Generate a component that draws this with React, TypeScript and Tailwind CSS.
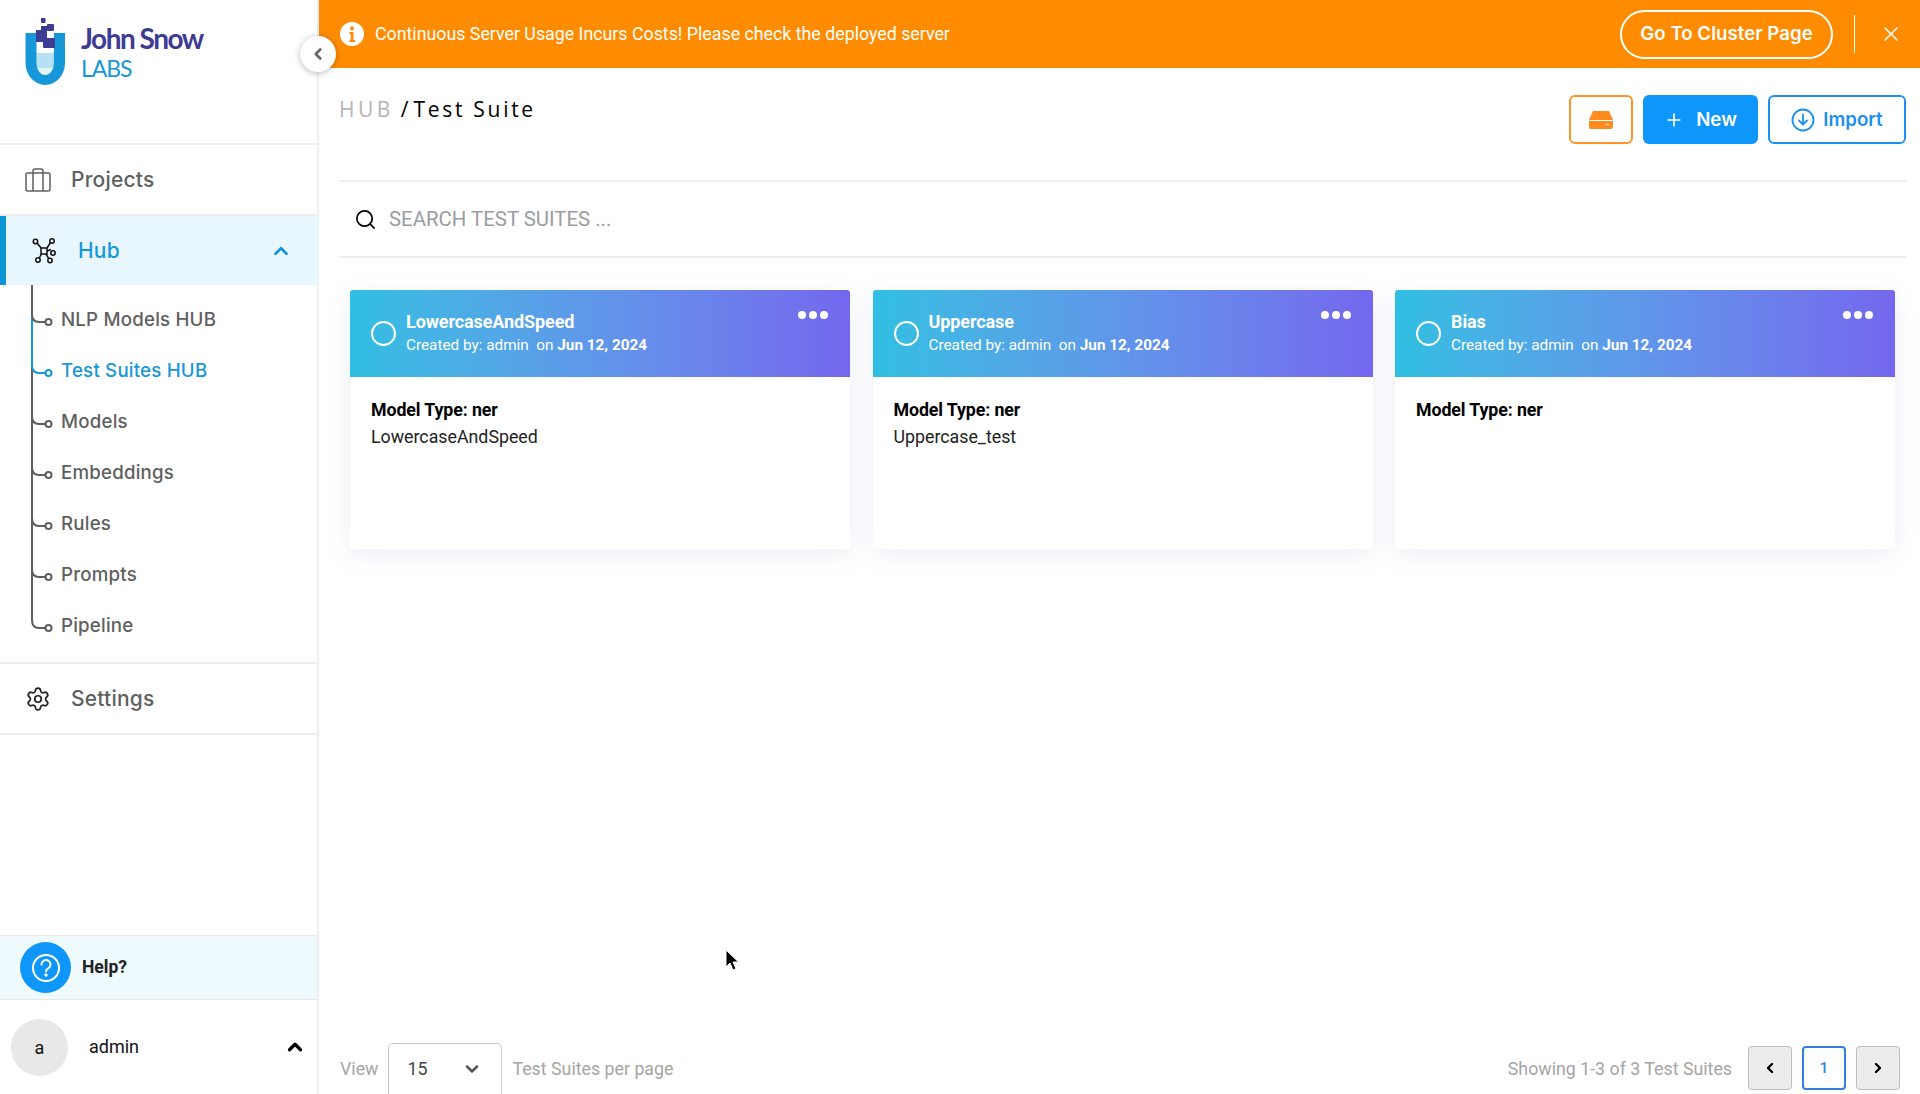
import React from "react";
import { Settings, Search, ChevronLeft, ChevronUp, ChevronDown, ChevronRight, Plus, X } from "lucide-react";

const navItems = ["NLP Models HUB", "Test Suites HUB", "Models", "Embeddings", "Rules", "Prompts", "Pipeline"];

function Logo() {
  return (
    <svg width="44" height="70" viewBox="24 17 44 70" className="shrink-0">
      <rect x="36.500" y="53" width="17.500" height="15" fill="#b6e1f4" />
      <path d="M36.500 68h17.500v3c-2 3-5 4.500-8.700 4.500s-6.800-1.500-8.800-4.500z" fill="#e4f4fb" />
      <path d="M25.500 33h11v30a8.700 12 0 0 0 17.400 0V33H65v30a19.750 22 0 0 1-39.500 0z" fill="#1697d8" />
      <rect x="41" y="18" width="4.500" height="5" rx="1" fill="#3d3c92" />
      <rect x="47" y="24" width="7" height="7" rx="1" fill="#3d3c92" />
      <rect x="36" y="30" width="11" height="12" fill="#3d3c92" />
      <rect x="41" y="26" width="6" height="5" fill="#3d3c92" />
      <rect x="43" y="38" width="12" height="10" rx="1" fill="#3d3c92" />
    </svg>
  );
}

function HubIcon() {
  return (
    <svg width="24" height="26" viewBox="0 0 24 26" fill="none" stroke="#111" strokeWidth="1.500">
      <rect x="9" y="10" width="6" height="6" />
      <circle cx="3.500" cy="3.500" r="2.200" />
      <circle cx="20" cy="3" r="2.200" />
      <circle cx="21" cy="15" r="2.200" />
      <circle cx="6" cy="22" r="2.200" />
      <circle cx="18" cy="22.500" r="2.200" />
      <path d="M5 5l4.500 5.500M18.500 4.500L15 10M15 13l4-1.500M9.500 16l-2.500 4.500M14 16l3 5" />
    </svg>
  );
}

function BagIcon() {
  return (
    <svg width="26" height="24" viewBox="0 0 26 24" fill="none" stroke="#5f5f5f" strokeWidth="1.500">
      <rect x="1" y="5" width="24" height="18" rx="2" />
      <path d="M8 23V3a2 2 0 0 1 2-2h6a2 2 0 0 1 2 2v20" />
    </svg>
  );
}

function TreeLines() {
  const ys = [37, 88, 139, 190, 241, 292, 343];
  return (
    <svg width="60" height="377" viewBox="0 0 60 377" fill="none" className="absolute left-0 top-0" strokeWidth="2">
      <path d="M32 0V335" stroke="#5f5f5f" />
      <path d="M32 30V80" stroke="#1697d8" />
      {ys.map((y, i) => (
        <g key={y} stroke={i === 1 ? "#1697d8" : "#5f5f5f"}>
          <path d={`M32 ${y - 8}c0 6 3 8 7 8h6.500`} />
          <circle cx="48.500" cy={y} r="3" />
        </g>
      ))}
    </svg>
  );
}

function Card({ title, desc }: { title: string; desc?: string }) {
  return (
    <div className="w-[500px] h-[259px] bg-white rounded-[3px] shadow-[0_5px_24px_rgba(225,228,240,0.6)]">
      <div className="h-[87px] rounded-t-[3px] bg-gradient-to-r from-[#2fbfe2] to-[#7467ee] flex items-center pl-[21px] pr-[20px] relative text-white">
        <div className="w-[25px] h-[25px] rounded-full border-[2px] border-white shrink-0" />
        <div className="ml-[10px] font-['Roboto',sans-serif]">
          <div className="text-[18px] leading-[22px] font-bold tracking-[-0.1px]">{title}</div>
          <div className="text-[15.300px] leading-[22px] mt-[1px]">
            Created by: admin&nbsp; on <span className="font-bold">Jun 12, 2024</span>
          </div>
        </div>
        <div className="absolute right-[22px] top-[21px] flex gap-[3px]">
          <span className="w-[8px] h-[8px] rounded-full bg-white" />
          <span className="w-[8px] h-[8px] rounded-full bg-white" />
          <span className="w-[8px] h-[8px] rounded-full bg-white" />
        </div>
      </div>
      <div className="pl-[21px] pt-[20px] font-['Roboto',sans-serif] text-[17.800px] leading-[26.500px]">
        <div className="font-bold text-black tracking-[-0.1px]">Model Type: ner</div>
        {desc && <div className="text-[#222]">{desc}</div>}
      </div>
    </div>
  );
}

export default function App() {
  return (
    <div className="w-[1920px] h-[1094px] overflow-hidden flex bg-white relative font-['Inter',sans-serif]">
      <aside className="w-[319px] shrink-0 h-full border-r-[2px] border-[#eeeeee] flex flex-col relative bg-white">
        <div className="h-[143px] shrink-0 pl-[24px] pt-[17px] flex items-start gap-[13px]">
          <Logo />
          <div className="pt-[5px]">
            <div className="font-['Lato',sans-serif] font-bold text-[28px] leading-[32px] tracking-[-1.500px] text-[#3d3c92] whitespace-nowrap">John Snow</div>
            <div className="font-['Lato',sans-serif] text-[23px] leading-[28px] tracking-[-1.100px] text-[#1697d8]">LABS</div>
          </div>
        </div>
        <div className="h-[73px] shrink-0 border-y-[2px] border-[#eeeeee] flex items-center pl-[25px] gap-[20px] text-[21px] font-medium text-[#5f5f5f]">
          <BagIcon />
          <span className="tracking-[0.200px]">Projects</span>
        </div>
        <div className="h-[69px] shrink-0 w-[319px] bg-[#e8f6fd] border-l-[6px] border-[#0d96d6] flex items-center pl-[26px] pr-[27px] text-[21px] font-medium text-[#1697d8]">
          <HubIcon />
          <span className="ml-[22px] flex-1 tracking-[0.200px]">Hub</span>
          <ChevronUp size={22} strokeWidth={3} />
        </div>
        <div className="h-[377px] shrink-0 relative pt-[10px]">
          <TreeLines />
          {navItems.map((n, i) => (
            <div key={n} className={`h-[51px] pl-[61px] flex items-center text-[18.700px] font-medium tracking-[0.200px] ${i === 1 ? "text-[#1697d8]" : "text-[#5f5f5f]"}`}>
              {n}
            </div>
          ))}
        </div>
        <div className="h-[73px] shrink-0 border-y-[2px] border-[#eeeeee] flex items-center pl-[25px] gap-[20px] text-[21px] font-medium text-[#5f5f5f]">
          <Settings size={26} strokeWidth={1.600} className="text-[#222]" />
          <span className="tracking-[0.200px]">Settings</span>
        </div>
        <div className="flex-1" />
        <div className="h-[65px] shrink-0 bg-[#eefafe] border-y border-[#e8e8e8] flex items-center pl-[20px] font-['Roboto',sans-serif]">
          <div className="w-[51px] h-[51px] rounded-full bg-[#0f96fb] flex items-center justify-center">
            <svg width="30" height="30" viewBox="0 0 30 30" fill="none" stroke="#fff" strokeWidth="2">
              <circle cx="15" cy="15" r="13" />
              <path d="M10.500 11.500a4.500 4.500 0 1 1 6.800 3.900c-1.400.8-2.300 1.700-2.300 3.100" strokeLinecap="round" />
              <circle cx="15" cy="22" r="0.700" fill="#fff" />
            </svg>
          </div>
          <span className="ml-[11px] text-[17.500px] font-bold text-[#222]">Help?</span>
        </div>
        <div className="h-[94px] shrink-0 flex items-center pl-[11px] pr-[11px] font-['Roboto',sans-serif] text-[18px] text-[#111]">
          <div className="w-[57px] h-[57px] rounded-full bg-[#e8e8e8] flex items-center justify-center">a</div>
          <span className="ml-[21px] flex-1 -mt-[2px]">admin</span>
          <ChevronUp size={22} strokeWidth={3.500} className="text-black -mt-[1px]" />
        </div>
      </aside>

      <button className="absolute left-[300px] top-[36px] w-[36px] h-[36px] rounded-full bg-white shadow-[0_1px_6px_rgba(0,0,0,0.28)] flex items-center justify-center z-10 text-[#666]">
        <ChevronLeft size={18} strokeWidth={3.500} />
      </button>

      <main className="flex-1 min-w-0 flex flex-col">
        <div className="h-[68px] shrink-0 bg-[#ff8b00] flex items-center pl-[13px] pr-[17px] text-white">
          <svg width="24" height="24" viewBox="0 0 24 24" className="shrink-0 ml-[8px]">
            <circle cx="12" cy="12" r="12" fill="#fff" />
            <circle cx="12" cy="6.500" r="2" fill="#ff8b00" />
            <path d="M9.500 10h4v8h1.500v2H9.500v-2h1.200v-6H9.500z" fill="#ff8b00" />
          </svg>
          <span className="ml-[11px] font-['Roboto',sans-serif] text-[17.800px]">Continuous Server Usage Incurs Costs! Please check the deployed server</span>
          <div className="flex-1" />
          <div className="w-[213px] h-[49px] rounded-full border-[2px] border-white flex items-center justify-center text-[18.700px] font-semibold whitespace-nowrap pt-[1px]">Go To Cluster Page</div>
          <div className="w-[1px] h-[38px] bg-white ml-[21px]" />
          <X size={24} strokeWidth={1.600} className="ml-[24px]" />
        </div>

        <div className="ml-[20px] mr-[14px] flex-1 flex flex-col min-h-0">
          <div className="h-[114px] shrink-0 flex items-start justify-between border-b-[2px] border-[#eeeeee]">
            <div className="mt-[27px] font-['Open_Sans',sans-serif] text-[21px] leading-[28px] flex">
              <span className="text-[#b5b5b5] tracking-[3.500px]">HUB</span>
              <span className="text-black ml-[7px]">/</span>
              <span className="text-black ml-[5px] tracking-[2.700px]">Test Suite</span>
            </div>
            <div className="mt-[27px] flex">
              <div className="w-[64px] h-[49px] rounded-[6px] border-[2px] border-[#ff9325] flex items-center justify-center">
                <svg width="24" height="18" viewBox="0 0 24 18">
                  <path d="M4 0h16l4 9H0z" fill="#ff8b1f" />
                  <path d="M0 10h24v6a2 2 0 0 1-2 2H2a2 2 0 0 1-2-2z" fill="#ff8b1f" />
                  <rect x="17" y="13" width="3" height="1" fill="#fff" />
                </svg>
              </div>
              <div className="ml-[10px] w-[115px] h-[49px] rounded-[6px] bg-[#0f96fb] text-white flex items-center justify-center gap-[12px] text-[18.700px] font-semibold">
                <Plus size={20} strokeWidth={2} />
                <span className="pt-[2px]">New</span>
              </div>
              <div className="ml-[10px] w-[138px] h-[49px] rounded-[6px] border-[2px] border-[#1b90f0] text-[#1b90f0] flex items-center justify-center gap-[8px] text-[18.700px] font-semibold">
                <svg width="24" height="24" viewBox="0 0 24 24" fill="none" stroke="currentColor" strokeWidth="1.800" strokeLinecap="round" strokeLinejoin="round">
                  <circle cx="12" cy="12" r="10.500" />
                  <path d="M12 6.500v10M8 12.500l4 4 4-4" />
                </svg>
                <span className="pt-[2px]">Import</span>
              </div>
            </div>
          </div>

          <div className="h-[76px] shrink-0 border-b-[2px] border-[#eeeeee] flex items-center pl-[15px]">
            <Search size={23} strokeWidth={1.800} className="text-black" />
            <span className="ml-[12px] font-['Roboto',sans-serif] text-[20.400px] text-[#9a9ca3]">SEARCH TEST SUITES ...</span>
          </div>

          <div className="mt-[32px] ml-[11px] flex gap-[22.500px]">
            <Card title="LowercaseAndSpeed" desc="LowercaseAndSpeed" />
            <Card title="Uppercase" desc="Uppercase_test" />
            <Card title="Bias" />
          </div>

          <div className="flex-1" />

          <div className="h-[51px] shrink-0 flex items-start font-['Roboto',sans-serif] text-[17.800px] text-[#a5a5a5]">
            <span className="mt-[13px] ml-[1px]">View</span>
            <div className="ml-[10px] w-[114px] h-[64px] rounded-[5px] border border-[#c8c8c8] flex items-start pt-[12px] pl-[18px] pr-[19px] text-[#444] justify-between">
              <span>15</span>
              <ChevronDown size={20} strokeWidth={3} className="text-[#555] mt-[3px]" />
            </div>
            <span className="mt-[13px] ml-[10px]">Test Suites per page</span>
            <div className="flex-1" />
            <span className="mt-[13px]">Showing 1-3 of 3 Test Suites</span>
            <div className="ml-[16px] mt-[3px] flex gap-[10px] mr-[6px]">
              <div className="w-[44px] h-[44px] rounded-[4px] bg-[#ececec] border border-[#bdbdbd] flex items-center justify-center text-black"><ChevronLeft size={16} strokeWidth={3.500} /></div>
              <div className="w-[44px] h-[44px] rounded-[4px] bg-white border-[2px] border-[#2f80e0] flex items-center justify-center text-[#2f80e0] text-[15px] font-medium">1</div>
              <div className="w-[44px] h-[44px] rounded-[4px] bg-[#ececec] border border-[#bdbdbd] flex items-center justify-center text-black"><ChevronRight size={16} strokeWidth={3.500} /></div>
            </div>
          </div>
        </div>
      </main>

      <svg width="14" height="23" viewBox="0 0 14 23" className="absolute left-[725px] top-[949px]">
        <path d="M1 1v17l4-4 3 7 3-1.300-3-6.700h5.500z" fill="#000" stroke="#fff" strokeWidth="1" />
      </svg>
    </div>
  );
}
